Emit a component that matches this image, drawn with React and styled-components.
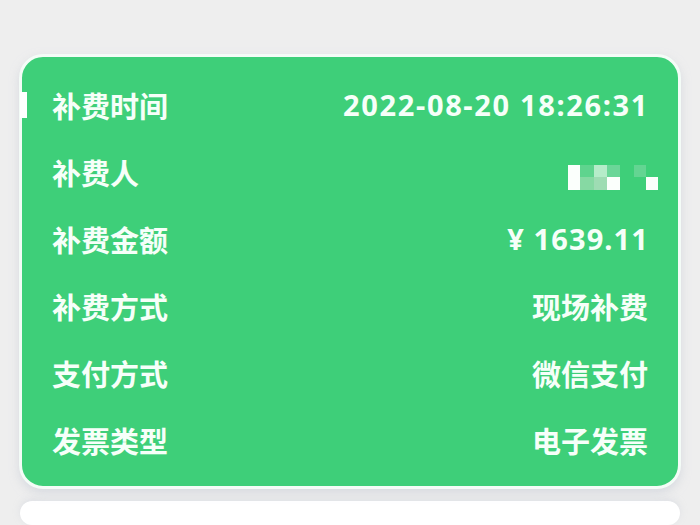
import styled, { createGlobalStyle } from "styled-components";

const GlobalStyle = createGlobalStyle`
  html, body {
    margin: 0;
    padding: 0;
    background: #eeeeee;
    font-family: "Noto Sans CJK SC", "Noto Sans", sans-serif;
  }
`;

const Page = styled.div`
  width: 700px;
  height: 525px;
  overflow: hidden;
  box-sizing: border-box;
  padding: 54px 19px 0 19px;
  display: flex;
  flex-direction: column;
  gap: 12px;
`;

const Card = styled.div`
  position: relative;
  background: #3ecf79;
  border: 3px solid #f4fcf7;
  border-radius: 24px;
  padding: 14px 30px 13px 30px;
  box-shadow: 0 4px 10px rgba(200, 205, 215, 0.6);
`;

const Marker = styled.div`
  position: absolute;
  left: -2px;
  top: 35px;
  width: 7px;
  height: 26px;
  background: #ffffff;
`;

const Row = styled.div`
  height: 67px;
  display: flex;
  align-items: center;
  justify-content: space-between;
  color: #f6fff9;
  font-size: 29px;
  font-weight: 700;
`;

const Value = styled.span`
  font-family: ${(p) => (p.spacing ? '"Noto Sans", "Noto Sans CJK SC", sans-serif' : "inherit")};
  font-weight: 700;
  letter-spacing: ${(p) => p.spacing || "0"};
  margin-right: ${(p) => (p.spacing ? "-1px" : "0")};
`;

const Mosaic = styled.div`
  display: grid;
  grid-template-columns: 12px 14px 13px 13px 14px 12px 12px;
  grid-template-rows: 12px 13px;
  margin-top: 11px;
  margin-right: -10px;
`;

const Pix = styled.div`
  background: ${(p) => p.c || "transparent"};
`;

const Sheet = styled.div`
  height: 60px;
  background: #ffffff;
  border-radius: 24px;
  margin: 0 1px;
  box-shadow: 0 -2px 6px rgba(210, 214, 222, 0.5);
`;

const rows = [
  { label: "补费时间", value: "2022-08-20 18:26:31", spacing: "1.65px" },
  { label: "补费人", mosaic: true },
  { label: "补费金额", value: "¥ 1639.11", spacing: "1.1px" },
  { label: "补费方式", value: "现场补费" },
  { label: "支付方式", value: "微信支付" },
  { label: "发票类型", value: "电子发票" },
];

const mosaicCells = [
  "#fbfffc", "#5fd48e", "#b5ecc9", "#6bd698", null, "#63d592", null,
  "#fbfffc", "#86d9a3", "#9edcb3", "#fbfffc", null, null, "#fbfffc",
];

export default function App() {
  return (
    <>
      <GlobalStyle />
      <Page>
        <Card>
          <Marker />
          {rows.map((r) => (
            <Row key={r.label}>
              <span>{r.label}</span>
              {r.mosaic ? (
                <Mosaic>
                  {mosaicCells.map((c, i) => (
                    <Pix key={i} c={c} />
                  ))}
                </Mosaic>
              ) : (
                <Value spacing={r.spacing}>{r.value}</Value>
              )}
            </Row>
          ))}
        </Card>
        <Sheet />
      </Page>
    </>
  );
}
